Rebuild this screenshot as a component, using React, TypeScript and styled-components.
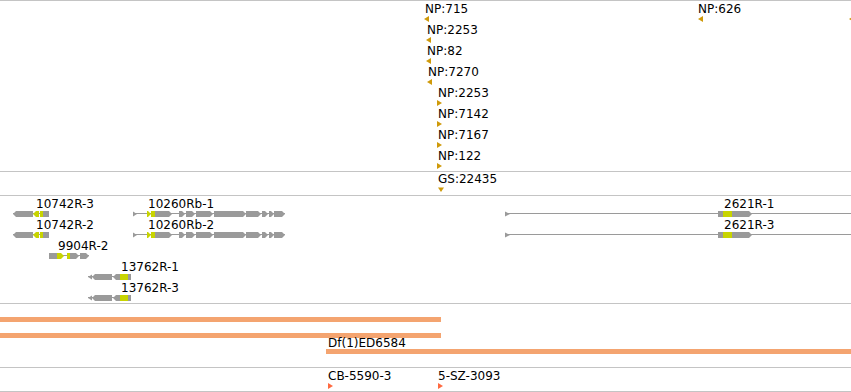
import React from "react"
import styled, { createGlobalStyle } from "styled-components"

const GlobalStyle = createGlobalStyle`
  html, body {
    margin: 0;
    padding: 0;
    background: #ffffff;
  }
  body {
    font-family: "DejaVu Sans", "Liberation Sans", sans-serif;
  }
`

const RULE = "#c4c4c4"
const EXON = "#9a9a9a"
const CDS = "#c8d400"
const GOLD = "#cf9a0a"
const ORANGE = "#f4a470"
const TOMATO = "#ff6a40"

type Part = { k: "e" | "c" | "t"; a: number; b: number; tip?: "l" | "r" }

type Glyph =
  | { type: "tri"; dir: "l" | "r" | "d"; color: string }
  | { type: "gene"; from: number; to: number; parts: Part[] }
  | { type: "bar"; width: number }

type Feat = { name?: string; lx?: number; x: number; y: number; glyph: Glyph }

type TrackData = { id: string; top: number; height: number; feats: Feat[] }

const Browser = styled.div`
  width: 851px;
  display: flex;
  flex-direction: column;
  overflow: hidden;
`

const Track = styled.div<{ $height: number }>`
  position: relative;
  box-sizing: border-box;
  height: ${p => p.$height}px;
  border-top: 1px solid ${RULE};
  overflow: hidden;

  &:last-child {
    border-bottom: 1px solid ${RULE};
  }
`

const Feature = styled.div<{ $x: number; $y: number }>`
  position: absolute;
  left: ${p => p.$x}px;
  top: ${p => p.$y}px;
  display: flex;
  flex-direction: column;
  align-items: flex-start;
`

const Label = styled.span<{ $dx: number }>`
  margin-left: ${p => p.$dx}px;
  height: 14px;
  font-size: 12px;
  line-height: 14px;
  color: #000000;
  white-space: nowrap;
`

const GlyphSvg = styled.svg`
  display: block;
  overflow: visible;
`

const Bar = styled.div<{ $w: number; $lift: boolean }>`
  width: ${p => p.$w}px;
  height: 5px;
  margin-top: ${p => (p.$lift ? -1 : 0)}px;
  background: ${ORANGE};
`

// exon shapes, coordinates relative to the gene start
function partPoints(p: Part, x0: number) {
  const a = p.a - x0
  const b = p.b - x0
  if (p.k === "t") {
    return p.tip === "l" ? `${b},0.5 ${a},3 ${b},5.5` : `${a},0.5 ${b},3 ${a},5.5`
  }
  if (p.tip === "r") return `${a},0 ${b - 3},0 ${b},3 ${b - 3},6 ${a},6`
  if (p.tip === "l") return `${a + 3},0 ${b},0 ${b},6 ${a + 3},6 ${a},3`
  return `${a},0 ${b},0 ${b},6 ${a},6`
}

const Triangle = ({ dir, color }: { dir: "l" | "r" | "d"; color: string }) => {
  const pts =
    dir === "l" ? "0,3 5,0 5,6" : dir === "r" ? "0,0 5,3 0,6" : "0,1.5 6,1.5 3,6"
  return (
    <GlyphSvg width={dir === "d" ? 6 : 5} height={6}>
      <polygon points={pts} fill={color} />
    </GlyphSvg>
  )
}

const Gene = ({ from, to, parts }: { from: number; to: number; parts: Part[] }) => (
  <GlyphSvg width={to - from} height={6}>
    <rect x={0} y={2} width={to - from} height={1} fill={EXON} />
    {parts.map((p, i) => (
      <polygon key={i} points={partPoints(p, from)} fill={p.k === "c" ? CDS : EXON} />
    ))}
  </GlyphSvg>
)

function renderGlyph(g: Glyph, labelled: boolean) {
  if (g.type === "tri") return <Triangle dir={g.dir} color={g.color} />
  if (g.type === "bar") return <Bar $w={g.width} $lift={labelled} />
  return <Gene from={g.from} to={g.to} parts={g.parts} />
}

const g10742: Glyph = {
  type: "gene",
  from: 13,
  to: 49,
  parts: [
    { k: "e", a: 13, b: 33, tip: "l" },
    { k: "c", a: 33, b: 39, tip: "l" },
    { k: "c", a: 40, b: 43 },
    { k: "e", a: 43, b: 49 },
  ],
}

const g9904: Glyph = {
  type: "gene",
  from: 49,
  to: 89,
  parts: [
    { k: "e", a: 49, b: 57 },
    { k: "c", a: 57, b: 64, tip: "r" },
    { k: "c", a: 67, b: 70 },
    { k: "e", a: 70, b: 79, tip: "r" },
    { k: "e", a: 80, b: 89, tip: "r" },
  ],
}

const g13762: Glyph = {
  type: "gene",
  from: 88,
  to: 131,
  parts: [
    { k: "t", a: 88, b: 92, tip: "l" },
    { k: "e", a: 92, b: 112, tip: "l" },
    { k: "e", a: 113, b: 120, tip: "l" },
    { k: "c", a: 120, b: 128 },
    { k: "e", a: 128, b: 131 },
  ],
}

const g10260: Glyph = {
  type: "gene",
  from: 133,
  to: 285,
  parts: [
    { k: "t", a: 133, b: 137, tip: "r" },
    { k: "c", a: 147, b: 151, tip: "r" },
    { k: "c", a: 151, b: 155 },
    { k: "e", a: 155, b: 172, tip: "r" },
    { k: "e", a: 179, b: 185, tip: "r" },
    { k: "e", a: 186, b: 195, tip: "r" },
    { k: "e", a: 196, b: 213, tip: "r" },
    { k: "e", a: 214, b: 246, tip: "r" },
    { k: "e", a: 246, b: 261, tip: "r" },
    { k: "e", a: 262, b: 268, tip: "r" },
    { k: "e", a: 269, b: 274, tip: "r" },
    { k: "e", a: 274, b: 285, tip: "r" },
  ],
}

const g2621: Glyph = {
  type: "gene",
  from: 505,
  to: 851,
  parts: [
    { k: "t", a: 505, b: 510, tip: "r" },
    { k: "e", a: 718, b: 723 },
    { k: "c", a: 723, b: 732 },
    { k: "e", a: 732, b: 752, tip: "r" },
  ],
}

const np = (dir: "l" | "r"): Glyph => ({ type: "tri", dir, color: GOLD })
const cb: Glyph = { type: "tri", dir: "r", color: TOMATO }

const tracks: TrackData[] = [
  {
    id: "np",
    top: 0,
    height: 171,
    feats: [
      { name: "NP:715", lx: 425, x: 424, y: 2, glyph: np("l") },
      { name: "NP:2253", lx: 427, x: 426, y: 23, glyph: np("l") },
      { name: "NP:82", lx: 427, x: 426, y: 44, glyph: np("l") },
      { name: "NP:7270", lx: 428, x: 427, y: 65, glyph: np("l") },
      { name: "NP:2253", lx: 438, x: 437, y: 86, glyph: np("r") },
      { name: "NP:7142", lx: 438, x: 437, y: 107, glyph: np("r") },
      { name: "NP:7167", lx: 438, x: 437, y: 128, glyph: np("r") },
      { name: "NP:122", lx: 438, x: 437, y: 149, glyph: np("r") },
      { name: "NP:626", lx: 698, x: 698, y: 2, glyph: np("l") },
      { x: 849, y: 16, glyph: np("l") },
    ],
  },
  {
    id: "gs",
    top: 171,
    height: 24,
    feats: [{ name: "GS:22435", lx: 438, x: 438, y: 172, glyph: { type: "tri", dir: "d", color: GOLD } }],
  },
  {
    id: "genes",
    top: 195,
    height: 108,
    feats: [
      { name: "10742R-3", lx: 36, x: 13, y: 197, glyph: g10742 },
      { name: "10742R-2", lx: 36, x: 13, y: 218, glyph: g10742 },
      { name: "9904R-2", lx: 58, x: 49, y: 239, glyph: g9904 },
      { name: "13762R-1", lx: 121, x: 88, y: 260, glyph: g13762 },
      { name: "13762R-3", lx: 121, x: 88, y: 281, glyph: g13762 },
      { name: "10260Rb-1", lx: 148, x: 133, y: 197, glyph: g10260 },
      { name: "10260Rb-2", lx: 148, x: 133, y: 218, glyph: g10260 },
      { name: "2621R-1", lx: 724, x: 505, y: 197, glyph: g2621 },
      { name: "2621R-3", lx: 724, x: 505, y: 218, glyph: g2621 },
    ],
  },
  {
    id: "df",
    top: 303,
    height: 64,
    feats: [
      { x: 0, y: 317, glyph: { type: "bar", width: 441 } },
      { x: 0, y: 333, glyph: { type: "bar", width: 441 } },
      { name: "Df(1)ED6584", lx: 328, x: 326, y: 336, glyph: { type: "bar", width: 525 } },
    ],
  },
  {
    id: "cb",
    top: 367,
    height: 25,
    feats: [
      { name: "CB-5590-3", lx: 328, x: 328, y: 369, glyph: cb },
      { name: "5-SZ-3093", lx: 438, x: 438, y: 369, glyph: cb },
    ],
  },
]

export default function App() {
  return (
    <>
      <GlobalStyle />
      <Browser>
        {tracks.map(t => (
          <Track key={t.id} $height={t.height}>
            {t.feats.map((f, i) => (
              <Feature key={i} $x={f.x} $y={f.y - t.top - 1}>
                {f.name && <Label $dx={(f.lx ?? f.x) - f.x}>{f.name}</Label>}
                {renderGlyph(f.glyph, !!f.name)}
              </Feature>
            ))}
          </Track>
        ))}
      </Browser>
    </>
  )
}
